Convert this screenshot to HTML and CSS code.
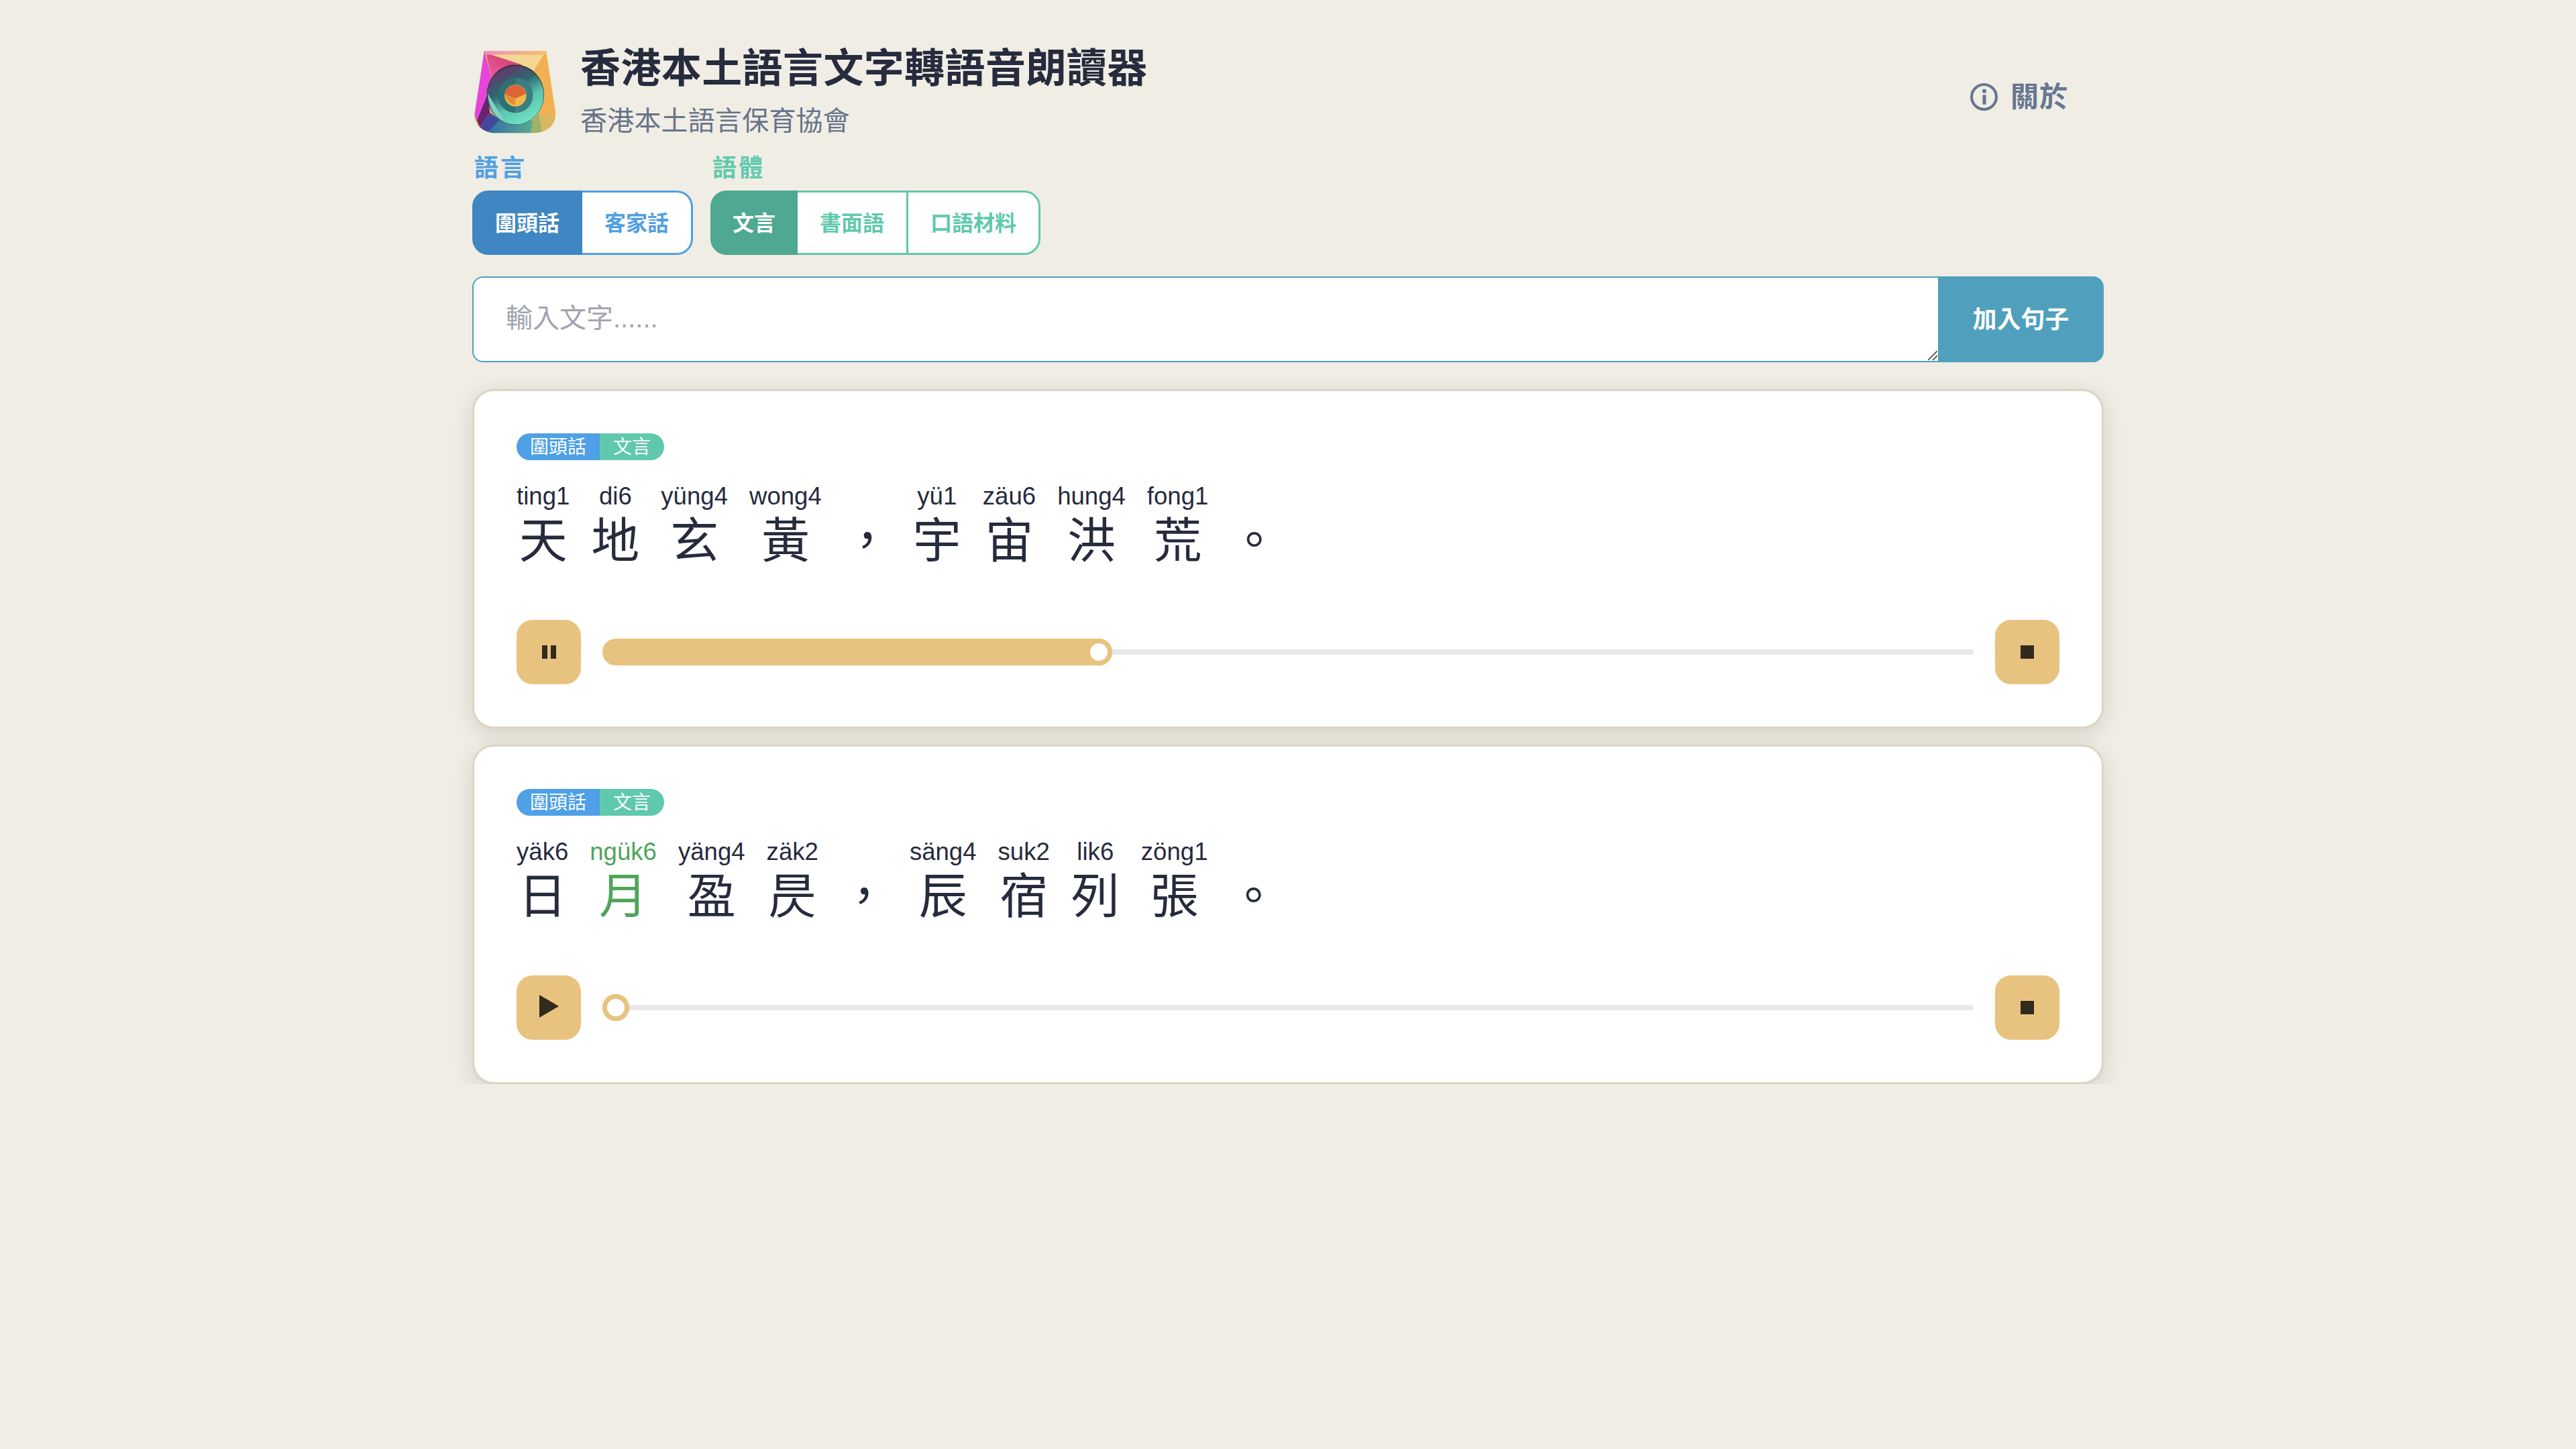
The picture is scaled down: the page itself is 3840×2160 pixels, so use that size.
FILE: index.html
```html
<!DOCTYPE html>
<html lang="zh-Hant-HK">
<head>
    <meta charset="UTF-8">
    <title>香港本土語言文字轉語音朗讀器</title>
    <link rel="stylesheet" href="styles.css">
</head>
<body>
<div class="page">
    <header class="top">
        <svg class="logo" viewBox="80 105 368 373">
            <defs>
                <clipPath id="cup"><path d="M125 107L403 107L445 380Q452 460 360 477L165 477Q75 460 82 385Z"/></clipPath>
                <linearGradient id="g-stripe" x1="0" x2="1" y1="0" y2="0"><stop offset="0" stop-color="#e88bc8"/><stop offset="1" stop-color="#f5c765"/></linearGradient>
                <linearGradient id="g-pink" x1="0" x2="1" y1="1" y2="0"><stop offset="0" stop-color="#ee5fa8"/><stop offset="1" stop-color="#c93a68"/></linearGradient>
                <linearGradient id="g-bottom" x1="0" x2="1" y1="0" y2="0"><stop offset="0" stop-color="#2f6ca6"/><stop offset="1" stop-color="#5cab8e"/></linearGradient>
                <linearGradient id="g-disc" x1="0.1" x2="0.6" y1="0.05" y2="1"><stop offset="0" stop-color="#6b2f68"/><stop offset="0.4" stop-color="#2f6670"/><stop offset="0.68" stop-color="#5cc4b0"/><stop offset="1" stop-color="#6fe2c4"/></linearGradient>
            </defs>
            <g clip-path="url(#cup)">
                <rect x="80" y="105" width="368" height="373" fill="#f1b153"/>
                <rect x="80" y="105" width="368" height="19" fill="url(#g-stripe)"/>
                <path d="M155 124L392 124L345 200L295 170Z" fill="#f6d694"/>
                <path d="M135 124L155 124L295 170L200 190L160 240Z" fill="url(#g-pink)"/>
                <path d="M125 107L160 240L140 300L92 420L80 400Z" fill="#e645dc"/>
                <path d="M140 300L92 420L105 450L150 385Z" fill="#6a2272"/>
                <path d="M150 385L105 450L135 478L200 420Z" fill="#40479c"/>
                <path d="M135 478L190 420L345 420L335 478Z" fill="url(#g-bottom)"/>
                <path d="M345 420L370 385L385 470L335 478Z" fill="#9ab36a"/>
                <path d="M370 385L445 400L420 450L385 470Z" fill="#d8b860"/>
            </g>
            <ellipse cx="265" cy="304" rx="129" ry="135" fill="#2c3038"/>
            <ellipse cx="265" cy="306" rx="127" ry="132" fill="url(#g-disc)"/>
            <path d="M140 298L215 422Q150 390 140 298Z" fill="#86d0c6"/>
            <path d="M265 228A78 78 0 0 1 265 386Z" fill="#3c7f80"/>
            <path d="M265 228A78 78 0 0 0 265 386Z" fill="#2f7074"/>
            <circle cx="265" cy="308" r="49" fill="#f2b84c"/>
            <path d="M216 300A49 49 0 0 1 312 300L265 322Z" fill="#dc6535"/>
            <path d="M216 300L265 322L265 350Q225 345 216 300Z" fill="#e0903a"/>
        </svg>
        <div class="brand">
            <h1 class="title">香港本土語言文字轉語音朗讀器</h1>
            <p class="org">香港本土語言保育協會</p>
        </div>
        <a class="about">
            <svg class="about-icon" viewBox="0 0 40 40">
                <circle cx="20" cy="20" r="18" fill="none" stroke="currentColor" stroke-width="4"/>
                <rect x="18" y="17" width="5" height="14" fill="currentColor"/>
                <circle cx="20.500" cy="11.500" r="3" fill="currentColor"/>
            </svg>
            關於
        </a>
    </header>

    <div class="options">
        <div class="option blue">
            <div class="option-label">語言</div>
            <div class="btn-group">
                <button class="opt active">圍頭話</button>
                <button class="opt">客家話</button>
            </div>
        </div>
        <div class="option green">
            <div class="option-label">語體</div>
            <div class="btn-group">
                <button class="opt active">文言</button>
                <button class="opt">書面語</button>
                <button class="opt">口語材料</button>
            </div>
        </div>
    </div>

    <div class="input-row">
        <textarea class="text-input" placeholder="輸入文字......"></textarea>
        <button class="add-btn">加入句子</button>
    </div>

    <section class="card">
        <div class="tags"><span class="tag-lang">圍頭話</span><span class="tag-style">文言</span></div>
        <div class="sentence">
            <div class="syl"><span class="py">ting1</span><span class="ch">天</span></div>
            <div class="syl"><span class="py">di6</span><span class="ch">地</span></div>
            <div class="syl"><span class="py">yüng4</span><span class="ch">玄</span></div>
            <div class="syl"><span class="py">wong4</span><span class="ch">黃</span></div>
            <div class="syl"><span class="py">&nbsp;</span><span class="ch">，</span></div>
            <div class="syl"><span class="py">yü1</span><span class="ch">宇</span></div>
            <div class="syl"><span class="py">zäu6</span><span class="ch">宙</span></div>
            <div class="syl"><span class="py">hung4</span><span class="ch">洪</span></div>
            <div class="syl"><span class="py">fong1</span><span class="ch">荒</span></div>
            <div class="syl"><span class="py">&nbsp;</span><span class="ch">。</span></div>
        </div>
        <div class="player">
            <button class="ctrl"><span class="pause"><i></i><i></i></span></button>
            <div class="slider">
                <div class="fill" style="width: 760px"><span class="thumb"></span></div>
                <div class="rest"></div>
            </div>
            <button class="ctrl"><span class="stop"></span></button>
        </div>
    </section>

    <section class="card">
        <div class="tags"><span class="tag-lang">圍頭話</span><span class="tag-style">文言</span></div>
        <div class="sentence">
            <div class="syl"><span class="py">yäk6</span><span class="ch">日</span></div>
            <div class="syl now"><span class="py">ngük6</span><span class="ch">月</span></div>
            <div class="syl"><span class="py">yäng4</span><span class="ch">盈</span></div>
            <div class="syl"><span class="py">zäk2</span><span class="ch">昃</span></div>
            <div class="syl"><span class="py">&nbsp;</span><span class="ch">，</span></div>
            <div class="syl"><span class="py">säng4</span><span class="ch">辰</span></div>
            <div class="syl"><span class="py">suk2</span><span class="ch">宿</span></div>
            <div class="syl"><span class="py">lik6</span><span class="ch">列</span></div>
            <div class="syl"><span class="py">zöng1</span><span class="ch">張</span></div>
            <div class="syl"><span class="py">&nbsp;</span><span class="ch">。</span></div>
        </div>
        <div class="player">
            <button class="ctrl"><span class="play"></span></button>
            <div class="slider">
                <div class="fill" style="width: 40px"><span class="thumb"></span></div>
                <div class="rest"></div>
            </div>
            <button class="ctrl"><span class="stop"></span></button>
        </div>
    </section>
</div>
</body>
</html>
```

FILE: styles.css
```css
*{margin: 0;padding: 0;box-sizing: border-box;}
body{background: #f0ede5;color: #262b3d;font-family: "Liberation Sans", "Noto Sans CJK TC", sans-serif;}
button,textarea{font-family: inherit;}
.page{width: 2432px;margin: 0 auto;padding-top: 62px;}

/*頂部*/
.top{display: flex;align-items: flex-start;height: 164px;}
.logo{width: 122px;height: 124px;margin: 13px 36px 0 3px;flex: none;}
.brand{flex: 1;padding-top: 3px;}
.title{font-size: 60px;line-height: 76px;font-weight: 700;letter-spacing: .4px;}
.org{font-size: 40px;line-height: 56px;margin-top: 11px;letter-spacing: .2px;color: #667389;}
.about{display: flex;align-items: center;gap: 19px;margin: 62px 53px 0 0;font-size: 42px;line-height: 40px;font-weight: 700;letter-spacing: 1px;color: #667690;}
.about-icon{width: 41px;height: 41px;}

/*選項*/
.options{display: flex;gap: 26px;}
.option-label{font-size: 36px;line-height: 50px;font-weight: 700;letter-spacing: 3px;padding-left: 3px;margin-bottom: 8px;}
.btn-group{display: flex;height: 96px;}
.opt{background: #fff;border: 3px solid;border-left-width: 0;padding: 0 33px 4px;font-size: 32px;font-weight: 700;height: 96px;}
.opt:first-child{border-left-width: 3px;border-radius: 24px 0 0 24px;padding: 0 31px 4px;}
.opt:last-child{border-radius: 0 24px 24px 0;}
.green .opt:first-child{padding: 0 30px 4px;}
.blue .option-label,.blue .opt{color: #4fa0e2;border-color: #4fa0e2;}
.green .option-label,.green .opt{color: #60c9ad;border-color: #60c9ad;}
.blue .opt.active{background: #3f86c2;border-color: #3f86c2;color: #fff;}
.green .opt.active{background: #4fa891;border-color: #4fa891;color: #fff;}

/*輸入*/
.input-row{display: flex;height: 128px;margin-top: 32px;}
.text-input{flex: 1;border: 2px solid #4f9fbd;border-right: 0;border-radius: 16px 0 0 16px;padding: 32px 48px;font-size: 40px;line-height: 56px;color: #262b3d;outline: none;resize: none;
    background: #fff linear-gradient(135deg, transparent 44%, #6b6b6b 44%, #6b6b6b 56%, transparent 56%, transparent 70%, #6b6b6b 70%, #6b6b6b 82%, transparent 82%) no-repeat right 1px bottom 1px / 14px 14px;
}
.text-input::placeholder{color: #a0a4ae;}
.add-btn{width: 247px;flex: none;background: #4f9fbd;border: 0;border-radius: 0 16px 16px 0;color: #fff;font-size: 36px;font-weight: 700;padding-bottom: 6px;}

/*句子卡片*/
.card{height: 506px;margin-top: 40px;background: #fff;border: 3px solid #dcd5c2;border-radius: 32px;padding: 63px;box-shadow: 0 8px 30px rgba(50,45,30,.14);}
.card + .card{margin-top: 24px;}
.tags{display: flex;width: max-content;height: 40px;border-radius: 20px;overflow: hidden;font-size: 28px;line-height: 42px;color: #fff;}
.tag-lang{background: #4fa0e6;padding: 0 20px;}
.tag-style{background: #60c9ad;padding: 0 20px;}

.sentence{display: flex;gap: 32px;margin-top: 23px;height: 133px;}
.syl{display: flex;flex-direction: column;align-items: center;min-width: 72px;}
.py{font-size: 36.600px;line-height: 61px;}
.ch{font-size: 72px;line-height: 72px;width: 72px;text-align: center;}
.now{color: #4fa55a;}

.player{display: flex;align-items: center;gap: 32px;margin-top: 82px;}
.ctrl{width: 96px;height: 96px;flex: none;background: #e8c37f;border: 0;border-radius: 24px;display: flex;align-items: center;justify-content: center;}
.slider{flex: 1;display: flex;align-items: center;height: 40px;}
.fill{height: 40px;flex: none;background: #e8c37f;border-radius: 20px;display: flex;justify-content: flex-end;}
.thumb{width: 40px;height: 40px;border-radius: 50%;background: #fff;border: 7px solid #e8c37f;}
.rest{flex: 1;height: 8px;background: #e8e8ea;border-radius: 0 4px 4px 0;}
.stop{width: 20px;height: 20px;background: #332a1e;}
.pause{display: flex;gap: 5px;}
.pause i{width: 8px;height: 20px;background: #332a1e;display: block;}
.play{width: 0;height: 0;margin-top: -4px;border-left: 29px solid #332a1e;border-top: 17px solid transparent;border-bottom: 17px solid transparent;}
```
